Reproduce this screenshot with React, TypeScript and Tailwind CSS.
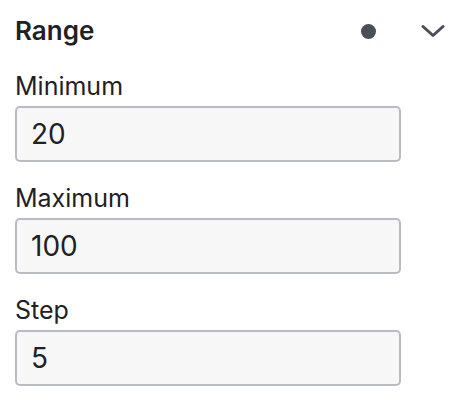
import React from "react"

const fields = [
  { label: "Minimum", value: "20" },
  { label: "Maximum", value: "100" },
  { label: "Step", value: "5" },
]

export default function App() {
  return (
    <div
      className="w-[460px] h-[414px] bg-white text-[#1f2124] pl-[15px] pt-[11px]"
      style={{ fontFamily: "Inter, 'Noto Sans', sans-serif" }}
    >
      {/* Header */}
      <div className="h-[40px] flex items-center w-[445px]">
        <h2 className="text-[26px] font-semibold leading-none flex-grow">Range</h2>
        <span className="w-[15px] h-[15px] rounded-full bg-[#4a4e5a] mr-[45px]" />
        <svg width="24" height="14" viewBox="0 0 24 14" className="mr-[15px]">
          <polyline
            points="2,2.5 12,11.5 22,2.5"
            fill="none"
            stroke="#4a4e5a"
            strokeWidth="3"
            strokeLinecap="round"
            strokeLinejoin="round"
          />
        </svg>
      </div>

      {/* Fields */}
      <div className="flex flex-col gap-[20px] mt-[19px]">
        {fields.map((f) => (
          <div key={f.label} className="flex flex-col">
            <label className="h-[32px] leading-[32px] text-[25px] mb-[4px]">{f.label}</label>
            <div className="w-[386px] h-[56px] border-2 border-[#b9bbc3] rounded-[5px] bg-[#f7f7f7] flex items-center px-[14px] text-[28px]">
              {f.value}
            </div>
          </div>
        ))}
      </div>
    </div>
  )
}
